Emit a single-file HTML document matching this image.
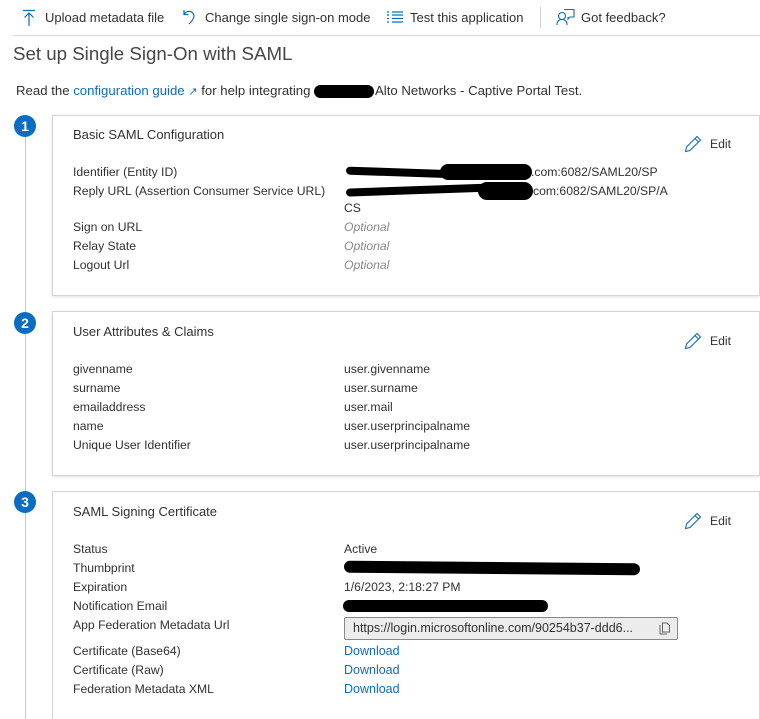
<!DOCTYPE html>
<html><head><meta charset="utf-8"><style>
*{margin:0;padding:0;box-sizing:border-box}
html,body{width:760px;height:719px;overflow:hidden}
body{background:#fff;font-family:"Liberation Sans",sans-serif;color:#323130;font-size:12.2px;position:relative}
.a{position:absolute;white-space:nowrap}
.card{position:absolute;left:52px;width:708px;border:1px solid #d4d4d4;box-shadow:0 1px 3px rgba(0,0,0,.12);background:#fff}
.num{position:absolute;left:14px;width:22px;height:22px;border-radius:50%;background:#0a6dc2;color:#fff;font-weight:bold;font-size:14px;text-align:center;line-height:22px}
.opt{color:#8a8886;font-style:italic}
.lnk{color:#0f6cbd}
.blob{position:absolute;background:#000;border-radius:8px}
.tb{font-size:13px;top:10px}
</style></head><body>
<svg class="a" style="left:22px;top:9px" width="14" height="18" viewBox="0 0 14 18"><path d="M1 1.5H13M7 4V17M2.5 8.5L7 4L11.5 8.5" stroke="#0f6cbd" stroke-width="1.2" fill="none"/></svg>
<div class="a tb" style="left:45px">Upload metadata file</div>
<svg class="a" style="left:182px;top:8px" width="14" height="18" viewBox="0 0 14 18"><path d="M2 2V6.5H6.5M2.3 6.2C4 3 8.5 2.5 10.8 5C13 7.5 12 11.5 7 16" stroke="#0f6cbd" stroke-width="1.2" fill="none"/></svg>
<div class="a tb" style="left:205px">Change single sign-on mode</div>
<svg class="a" style="left:386px;top:10px" width="18" height="14" viewBox="0 0 18 14"><path d="M6 2H17M6 5H17M6 8.5H17M6 12H17M1 2H3M1 5H3M1 8.5H3M1 12H3" stroke="#0f6cbd" stroke-width="1.2" fill="none"/></svg>
<div class="a tb" style="left:410px">Test this application</div>
<div class="a" style="left:540px;top:7px;width:1px;height:21px;background:#d0d0d0"></div>
<svg class="a" style="left:556px;top:8px" width="20" height="18" viewBox="0 0 20 18"><circle cx="6" cy="8" r="3.5" stroke="#0f6cbd" stroke-width="1.1" fill="none"/><path d="M1 17C1 13 3 11.5 6 11.5S11 13 11 17M8 1.5H18V9H14L12 11V9" stroke="#0f6cbd" stroke-width="1.1" fill="none"/></svg>
<div class="a tb" style="left:581px">Got feedback?</div>
<div class="a" style="left:13px;top:35px;width:747px;height:1px;background:#d6d6d6"></div>
<div class="a" style="left:13px;top:43px;font-size:18.7px;color:#484644">Set up Single Sign-On with SAML</div>
<div class="a" style="left:16px;top:83px;font-size:13.2px">Read the <span class="lnk">configuration guide</span> <span class="lnk" style="font-size:11px">&#x2197;</span> for help integrating</div>
<div class="a" style="left:375px;top:83px;font-size:13.2px">Alto Networks - Captive Portal Test.</div>
<div class="blob" style="left:314px;top:85px;width:60px;height:13px;border-radius:7px"></div>
<div class="a" style="left:25px;top:130px;width:1px;height:589px;background:#c8c6c4"></div>
<div class="num" style="top:115px">1</div>
<div class="num" style="top:312px">2</div>
<div class="num" style="top:491px">3</div>
<div class="card" style="top:115px;height:181px"></div>
<div class="a" style="left:73px;top:127px;font-size:13px">Basic SAML Configuration</div>
<svg class="a" style="left:684px;top:135px" width="18" height="18" viewBox="0 0 18 18"><path d="M13 1.5L16.5 5L6 15.5L1.5 16.5L2.5 12Z M11 3.5L14.5 7" stroke="#0f6cbd" stroke-width="1.1" fill="none"/></svg>
<div class="a" style="left:710px;top:137px">Edit</div>
<div class="a" style="left:73px;top:165px">Identifier (Entity ID)</div>
<div class="a" style="left:73px;top:184px">Reply URL (Assertion Consumer Service URL)</div>
<div class="a" style="left:73px;top:220px">Sign on URL</div>
<div class="a" style="left:73px;top:239px">Relay State</div>
<div class="a" style="left:73px;top:258px">Logout Url</div>
<div class="a" style="left:531px;top:165px">.com:6082/SAML20/SP</div>
<div class="a" style="left:533px;top:184px">com:6082/SAML20/SP/A</div>
<div class="a" style="left:344px;top:201px">CS</div>
<div class="a opt" style="left:344px;top:220px">Optional</div>
<div class="a opt" style="left:344px;top:239px">Optional</div>
<div class="a opt" style="left:344px;top:258px">Optional</div>
<div class="blob" style="left:346px;top:169px;width:140px;height:8px;transform:rotate(2deg)"></div>
<div class="blob" style="left:440px;top:164px;width:92px;height:16px;border-radius:9px"></div>
<div class="blob" style="left:346px;top:186px;width:150px;height:8px;transform:rotate(-2deg)"></div>
<div class="blob" style="left:478px;top:182px;width:55px;height:18px;border-radius:9px"></div>
<div class="card" style="top:311px;height:165px"></div>
<div class="a" style="left:73px;top:324px;font-size:13px">User Attributes &amp; Claims</div>
<svg class="a" style="left:684px;top:332px" width="18" height="18" viewBox="0 0 18 18"><path d="M13 1.5L16.5 5L6 15.5L1.5 16.5L2.5 12Z M11 3.5L14.5 7" stroke="#0f6cbd" stroke-width="1.1" fill="none"/></svg>
<div class="a" style="left:710px;top:334px">Edit</div>
<div class="a" style="left:73px;top:362px">givenname</div>
<div class="a" style="left:73px;top:381px">surname</div>
<div class="a" style="left:73px;top:400px">emailaddress</div>
<div class="a" style="left:73px;top:419px">name</div>
<div class="a" style="left:73px;top:438px">Unique User Identifier</div>
<div class="a" style="left:344px;top:362px">user.givenname</div>
<div class="a" style="left:344px;top:381px">user.surname</div>
<div class="a" style="left:344px;top:400px">user.mail</div>
<div class="a" style="left:344px;top:419px">user.userprincipalname</div>
<div class="a" style="left:344px;top:438px">user.userprincipalname</div>
<div class="card" style="top:491px;height:228px;border-bottom:none;box-shadow:none"></div>
<div class="a" style="left:73px;top:504px;font-size:13px">SAML Signing Certificate</div>
<svg class="a" style="left:684px;top:512px" width="18" height="18" viewBox="0 0 18 18"><path d="M13 1.5L16.5 5L6 15.5L1.5 16.5L2.5 12Z M11 3.5L14.5 7" stroke="#0f6cbd" stroke-width="1.1" fill="none"/></svg>
<div class="a" style="left:710px;top:514px">Edit</div>
<div class="a" style="left:73px;top:542px">Status</div>
<div class="a" style="left:73px;top:561px">Thumbprint</div>
<div class="a" style="left:73px;top:580px">Expiration</div>
<div class="a" style="left:73px;top:599px">Notification Email</div>
<div class="a" style="left:73px;top:618px">App Federation Metadata Url</div>
<div class="a" style="left:73px;top:644px">Certificate (Base64)</div>
<div class="a" style="left:73px;top:663px">Certificate (Raw)</div>
<div class="a" style="left:73px;top:682px">Federation Metadata XML</div>
<div class="a" style="left:344px;top:542px">Active</div>
<div class="a" style="left:344px;top:580px">1/6/2023, 2:18:27 PM</div>
<div class="blob" style="left:344px;top:562px;width:296px;height:12px;border-radius:6px;transform:rotate(0.5deg)"></div>
<div class="blob" style="left:343px;top:600px;width:205px;height:12px;border-radius:6px"></div>
<div class="a" style="left:344px;top:617px;width:334px;height:23px;background:#ececec;border:1px solid #8a8886;border-radius:2px;font-size:12.5px;line-height:21px;padding-left:8px;color:#323130">https://login.microsoftonline.com/90254b37-ddd6...</div>
<svg class="a" style="left:659px;top:622px" width="12" height="13" viewBox="0 0 12 13"><path d="M1 3V12H8M3.5 1H8L10.5 3.5V10H3.5Z" stroke="#666" stroke-width="1" fill="none"/></svg>
<div class="a lnk" style="left:344px;top:644px;font-size:12.5px">Download</div>
<div class="a lnk" style="left:344px;top:663px;font-size:12.5px">Download</div>
<div class="a lnk" style="left:344px;top:682px;font-size:12.5px">Download</div>
</body></html>
